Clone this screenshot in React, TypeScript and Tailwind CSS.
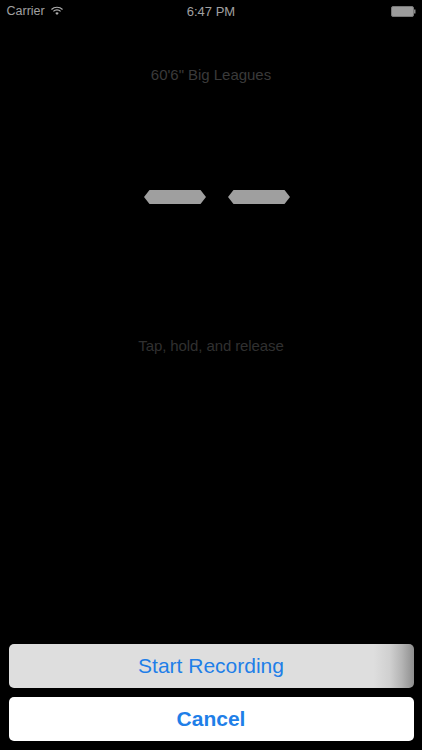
export default function App() {
  const font = { fontFamily: '"Liberation Sans", Arial, sans-serif' };
  return (
    <div className="w-[422px] h-[750px] bg-black flex flex-col overflow-hidden" style={font}>
      <div className="h-[22px] shrink-0 flex items-center justify-between pl-[6.5px] pr-[6px] pt-[1px] text-[#a0a0a0] text-[12.5px] relative">
        <div className="flex items-center gap-[6px]">
          <span>Carrier</span>
          <svg width="12" height="10" viewBox="0 0 13 10" className="mb-[1px]">
            <path d="M0.5 3.4 A8.5 8.5 0 0 1 12.5 3.4" fill="none" stroke="#b0b0b0" strokeWidth="1.3" />
            <path d="M2.6 5.4 A5.6 5.6 0 0 1 10.4 5.4" fill="none" stroke="#b0b0b0" strokeWidth="1.3" />
            <path d="M4.6 7.3 A2.8 2.8 0 0 1 8.4 7.3 L6.5 9.4 Z" fill="#b0b0b0" />
          </svg>
        </div>
        <span className="absolute left-0 right-0 text-center text-[13px]">6:47 PM</span>
        <svg width="25" height="11" viewBox="0 0 25 11">
          <rect x="0.5" y="0.5" width="22" height="10" rx="1.5" fill="#9c9c9c" stroke="#777" />
          <rect x="23" y="3.5" width="1.5" height="4" fill="#8a8a8a" />
        </svg>
      </div>
      <div className="mt-[44px] h-[17px] flex items-center justify-center text-[15px] tracking-[-0.03px] text-[#3a3a3a] leading-none">
        60'6" Big Leagues
      </div>
      <div className="mt-[106px] h-[15px] flex items-center justify-center gap-[22px] ml-[12px]">
        <svg width="62" height="14" viewBox="0 0 62 14"><polygon points="5.5,0 56.5,0 62,7 56.5,14 5.5,14 0,7" fill="#9f9f9f" /></svg>
        <svg width="62" height="14" viewBox="0 0 62 14"><polygon points="5.5,0 56.5,0 62,7 56.5,14 5.5,14 0,7" fill="#9f9f9f" /></svg>
      </div>
      <div className="mt-[133px] h-[17px] flex items-center justify-center text-[15px] tracking-[-0.1px] text-[#303030] leading-none">
        Tap, hold, and release
      </div>
      <div className="mt-auto px-[8.5px] pb-[9px] flex flex-col gap-[8.5px]">
        <button className="h-[44.5px] rounded-[5px] bg-[linear-gradient(to_right,#dedede_0%,#dedede_90%,#d0d0d0_94%,#b4b4b4_97%,#8e8e8e_100%)] text-[#1f7fe8] text-[21px]">
          Start Recording
        </button>
        <button className="h-[44.5px] rounded-[5px] bg-white text-[#1f7fe8] text-[21px] font-bold">
          Cancel
        </button>
      </div>
    </div>
  );
}
